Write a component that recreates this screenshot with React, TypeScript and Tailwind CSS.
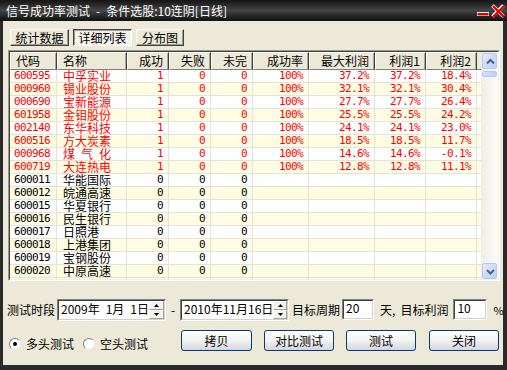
import React from "react";

const cjk = "font-['Noto_Sans_CJK_SC',sans-serif]";
const mono = "font-['DejaVu_Sans_Mono',monospace] text-[11px] tracking-[-0.6px]";

type Col = { label: string; w: string; left?: boolean };

const cols: Col[] = [
  { label: "代码", w: "w-[47px]", left: true },
  { label: "名称", w: "w-[70px]", left: true },
  { label: "成功", w: "w-[42px]" },
  { label: "失败", w: "w-[42px]" },
  { label: "未完", w: "w-[42px]" },
  { label: "成功率", w: "w-[56px]" },
  { label: "最大利润", w: "w-[66px]" },
  { label: "利润1", w: "w-[51px]" },
  { label: "利润2", w: "w-[51px]" },
];

const hit = (code: string, name: string, max: string, p1: string, p2: string) => [code, name, "1", "0", "0", "100%", max, p1, p2];
const miss = (code: string, name: string) => [code, name, "0", "0", "0", "", "", "", ""];

const rows = [
  hit("600595", "中孚实业", "37.2%", "37.2%", "18.4%"),
  hit("000960", "锡业股份", "32.1%", "32.1%", "30.4%"),
  hit("000690", "宝新能源", "27.7%", "27.7%", "26.4%"),
  hit("601958", "金钼股份", "25.5%", "25.5%", "24.2%"),
  hit("002140", "东华科技", "24.1%", "24.1%", "23.0%"),
  hit("600516", "方大炭素", "18.5%", "18.5%", "11.7%"),
  hit("000968", "煤\u2002气\u2002化", "14.6%", "14.6%", "-0.1%"),
  hit("600719", "大连热电", "12.8%", "12.8%", "11.1%"),
  miss("600011", "华能国际"),
  miss("600012", "皖通高速"),
  miss("600015", "华夏银行"),
  miss("600016", "民生银行"),
  miss("600017", "日照港"),
  miss("600018", "上港集团"),
  miss("600019", "宝钢股份"),
  miss("600020", "中原高速"),
];

function Chevron({ down }: { down?: boolean }) {
  return (
    <svg width="15" height="16" viewBox="0 0 15 16">
      <polyline
        points={down ? "4,6 7.5,9.5 11,6" : "4,9.5 7.5,6 11,9.5"}
        fill="none"
        stroke="#4d6185"
        strokeWidth="2"
      />
    </svg>
  );
}

function Radio({ checked }: { checked?: boolean }) {
  return (
    <div className="w-[12px] h-[12px] shrink-0 rounded-full bg-white border border-t-[#808080] border-l-[#808080] border-r-[#e8e8e8] border-b-[#e8e8e8] flex items-center justify-center">
      {checked && <div className="w-[4px] h-[4px] rounded-full bg-black" />}
    </div>
  );
}

function Spinner() {
  return (
    <div className="w-[17px] h-full flex flex-col">
      <div className="flex-1 bg-[#f3f2ec] border border-t-white border-l-white border-r-[#a0a0a0] border-b-[#a0a0a0] flex items-center justify-center">
        <svg width="5" height="3" viewBox="0 0 5 3"><polygon points="0,3 2.5,0 5,3" fill="#000" /></svg>
      </div>
      <div className="flex-1 bg-[#f3f2ec] border border-t-white border-l-white border-r-[#a0a0a0] border-b-[#a0a0a0] flex items-center justify-center">
        <svg width="5" height="3" viewBox="0 0 5 3"><polygon points="0,0 5,0 2.5,3" fill="#000" /></svg>
      </div>
    </div>
  );
}

function DateBox({ text }: { text: string }) {
  return (
    <div className="w-[109px] h-[22px] shrink-0 bg-white border border-t-[#808080] border-l-[#808080] border-r-white border-b-white">
      <div className="h-full flex border border-t-[#404040] border-l-[#404040] border-r-[#d4d0c8] border-b-[#d4d0c8]">
        <div className="flex-1 flex items-center pl-[2px] pb-[2px] text-[12px] leading-[14px] whitespace-pre">{text}</div>
        <Spinner />
      </div>
    </div>
  );
}

function NumBox({ value, w }: { value: string; w: string }) {
  return (
    <div className={`${w} h-[21px] shrink-0 bg-white border border-t-[#808080] border-l-[#808080] border-r-white border-b-white`}>
      <div className="h-full border border-t-[#404040] border-l-[#404040] border-r-[#d4d0c8] border-b-[#d4d0c8] pl-[2px] text-[12px] leading-[14px]">{value}</div>
    </div>
  );
}

function XpButton({ label, w }: { label: string; w: string }) {
  return (
    <div className={`${w} h-[21px] shrink-0 rounded-[3px] border border-[#003c74] bg-linear-to-b from-white via-[#f2f2f0] to-[#d6d6e0] text-[12px] leading-[14px] flex items-center justify-center`}>
      {label}
    </div>
  );
}

export default function App() {
  return (
    <div className={`w-[507px] h-[370px] bg-[#2b2b2b] flex flex-col ${cjk} text-black`}>
      {/* title bar */}
      <div className="h-[21px] shrink-0 flex items-center justify-between bg-linear-to-b from-[#151515] via-[#454545] to-[#101010]">
        <span className="pl-[6px] text-[12px] text-white leading-[14px] whitespace-pre">{"信号成功率测试\u2002-\u2002条件选股:10连阴[日线]"}</span>
        <svg width="30" height="21" viewBox="0 0 30 21" className="mr-[1px]">
          <rect x="1" y="12" width="12" height="4" fill="#ffffff" />
          <rect x="1.5" y="13" width="11" height="2.5" fill="#e00000" />
          <line x1="16.5" y1="5.5" x2="27.5" y2="16.5" stroke="#ffffff" strokeWidth="3.6" />
          <line x1="27.5" y1="5.5" x2="16.5" y2="16.5" stroke="#ffffff" strokeWidth="3.6" />
          <line x1="17" y1="6" x2="28" y2="17" stroke="#e00000" strokeWidth="2.4" />
          <line x1="28" y1="6" x2="17" y2="17" stroke="#e00000" strokeWidth="2.4" />
        </svg>
      </div>

      <div className="ml-[3px] mr-[4px] mb-[5px] flex-1 bg-[#ece9d8] flex flex-col text-[12px]">
        {/* tabs */}
        <div className="ml-[7px] mt-[8px] flex gap-[4px] h-[17px] leading-[14px]">
          <div className="w-[59px] h-full flex items-center justify-center border border-t-white border-l-white border-r-[#404040] border-b-[#404040] shadow-[inset_-1px_-1px_0_#9d9a8c]">统计数据</div>
          <div className="w-[59px] h-full flex items-center justify-center border border-t-[#404040] border-l-[#404040] border-r-white border-b-white shadow-[inset_1px_1px_0_#9d9a8c] bg-[repeating-conic-gradient(#ffffff_0%_25%,#ece9d8_0%_50%)] bg-[length:2px_2px]">详细列表</div>
          <div className="w-[48px] h-full flex items-center justify-center border border-t-white border-l-white border-r-[#404040] border-b-[#404040] shadow-[inset_-1px_-1px_0_#9d9a8c]">分布图</div>
        </div>

        {/* grid */}
        <div className="ml-[5px] mt-[4px] w-[492px] h-[231px] border border-t-[#9d9a8c] border-l-[#9d9a8c] border-r-white border-b-white">
          <div className="h-full flex border border-t-[#404040] border-l-[#404040] border-r-[#f1efe2] border-b-[#f1efe2]">
            <div className="flex-1 flex flex-col overflow-hidden">
              <div className="flex h-[18px] shrink-0">
                {cols.map((c) => (
                  <div
                    key={c.label}
                    className={`${c.w} shrink-0 h-full flex items-center bg-[#ece9d8] border border-t-white border-l-white border-r-[#404040] border-b-[#808080] shadow-[inset_-1px_0_0_#aca899] leading-[12px] ${c.left ? "pl-[5px]" : "justify-end pr-[5px]"}`}
                  >
                    {c.label}
                  </div>
                ))}
                <div className="w-[4px] shrink-0 h-full bg-[#ece9d8] border-b border-b-[#808080]" />
              </div>
              {rows.map((r, i) => (
                <div
                  key={r[0]}
                  className={`flex h-[13px] shrink-0 border-b border-[#e5e3d6] ${i % 2 ? "bg-[#fefce3]" : "bg-white"} ${i < 8 ? "text-[#ff0000]" : "text-black"}`}
                >
                  {cols.map((c, j) => (
                    <div
                      key={c.label}
                      className={`${c.w} shrink-0 h-full border-r border-[#e5e3d6] flex items-center whitespace-pre leading-[12px] ${j === 1 ? "text-[12px] pl-[6px]" : mono} ${j === 0 ? "pl-[4px]" : ""} ${j >= 2 ? "justify-end pr-[5px]" : ""}`}
                    >
                      {r[j]}
                    </div>
                  ))}
                  <div className="w-[4px] shrink-0" />
                </div>
              ))}
              <div className="flex h-[13px] shrink-0 bg-[#fefce3]">
                {cols.map((c) => (
                  <div key={c.label} className={`${c.w} shrink-0 h-full border-r border-[#e5e3d6]`} />
                ))}
              </div>
            </div>
            {/* scrollbar */}
            <div className="w-[17px] shrink-0 flex flex-col justify-between px-[1px] pt-[1px] bg-linear-to-r from-[#eeede5] to-[#fbfbf8]">
              <div className="flex flex-col gap-[2px]">
                <div className="w-[15px] h-[16px] rounded-[2px] border border-[#b5c8f5] bg-linear-to-br from-[#e3ebfe] to-[#b9cdf9]">
                  <Chevron />
                </div>
                <div className="w-[15px] h-[6px] rounded-[2px] border border-[#b5c8f5] bg-linear-to-r from-[#cfdcfd] to-[#bccff9]" />
              </div>
              <div className="w-[15px] h-[16px] rounded-[2px] border border-[#b5c8f5] bg-linear-to-br from-[#e3ebfe] to-[#b9cdf9]">
                <Chevron down />
              </div>
            </div>
          </div>
        </div>

        {/* period row */}
        <div className="mt-[18px] flex items-start h-[22px] whitespace-nowrap leading-[14px]">
          <span className="ml-[4px] mt-[4px] shrink-0">测试时段</span>
          <div className="ml-[2px] shrink-0">
            <DateBox text={"2009年\u20021月\u20021日"} />
          </div>
          <span className="w-[14px] shrink-0 text-center mt-[4px]">-</span>
          <DateBox text="2010年11月16日" />
          <span className="ml-[3px] mt-[4px] shrink-0">目标周期</span>
          <div className="ml-[2px] shrink-0">
            <NumBox value="20" w="w-[32px]" />
          </div>
          <span className="ml-[6px] mt-[4px] shrink-0">天,</span>
          <span className="ml-[5px] mt-[4px] shrink-0">目标利润</span>
          <div className="ml-[5px] shrink-0">
            <NumBox value="10" w="w-[34px]" />
          </div>
          <span className="ml-[6px] mt-[4px] shrink-0 text-[11px]">%</span>
        </div>

        {/* action row */}
        <div className="mt-[9px] flex items-start h-[21px] whitespace-nowrap">
          <div className="ml-[6px] mt-[7px] flex items-center h-[13px] leading-[14px]">
            <Radio checked />
            <span className="ml-[5px]">多头测试</span>
            <div className="ml-[9px]">
              <Radio />
            </div>
            <span className="ml-[5px]">空头测试</span>
          </div>
          <div className="ml-[33px] flex gap-[12px]">
            <XpButton label="拷贝" w="w-[71px]" />
            <XpButton label="对比测试" w="w-[70px]" />
            <XpButton label="测试" w="w-[70px]" />
            <div className="ml-[1px]">
              <XpButton label="关闭" w="w-[70px]" />
            </div>
          </div>
        </div>
      </div>
    </div>
  );
}
